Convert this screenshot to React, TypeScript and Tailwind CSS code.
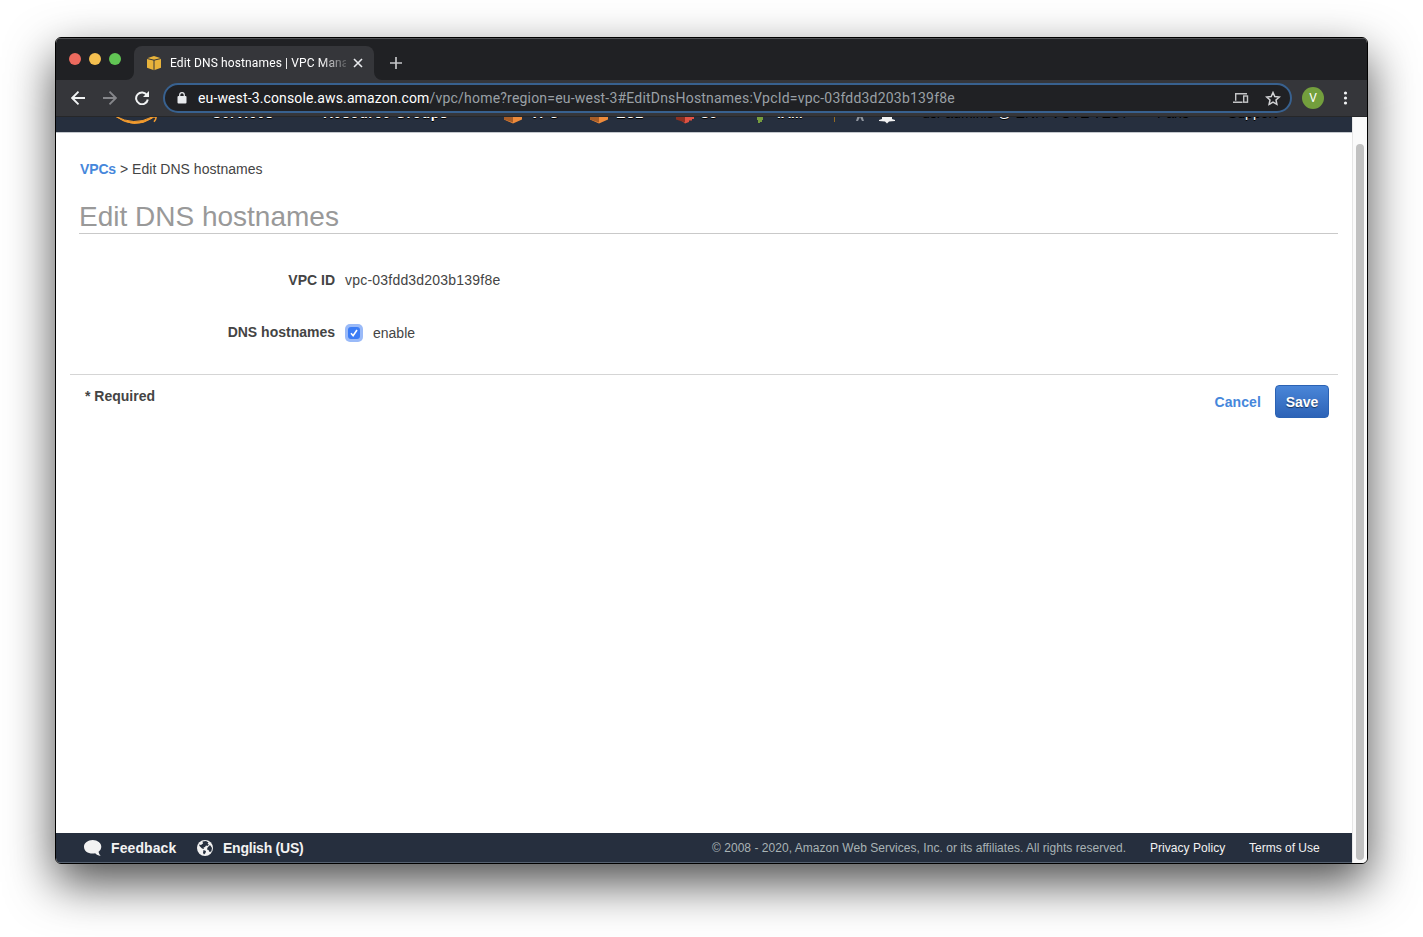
import React from "react";

function Line({ children, className, ls, size }: { children: React.ReactNode; className: string; ls?: number; size: number }) {
  return (
    <span className={"block whitespace-nowrap " + className} style={{ letterSpacing: ls, fontSize: size }}>
      {children}
    </span>
  );
}

const cube = (
  <svg width="16" height="16" viewBox="0 0 16 16" fill="none">
    <path d="M1 3.2 8 1l7 2.2v9.6L8 15.2l-7-2.4z" fill="#e8b33b" />
    <path d="M1 3.5 8 5.2 15 3.5M8 5v10.5" stroke="#35363a" strokeWidth="1" />
  </svg>
);

function Service({ label, color, dark, shape, gap }: { label: string; color: string; dark: string; shape: string; gap: string }) {
  return (
    <div className={"flex items-end " + gap}>
      <svg width="18" height="18" viewBox="0 0 18 18">
        <path d={shape} fill={color} />
        <path d="M0 3l9 2v11.500L0 13.500z" fill={dark} opacity={shape.startsWith("M6") ? 0 : 1} />
      </svg>
      <span className="mb-[2px] leading-[18px]">{label}</span>
    </div>
  );
}

const box = "M0 3l9-3 9 3v10.500L9 17.500 0 13.500z";
const bucket = "M0 3l9-3 9 3v10h-2v1.500h-3v1.500L9 17.500 6 15V14H2v-1H0z";
const key = "M6 0h6v14h-1v2H9v1H7v-3H6z";

export default function App() {
  return (
    <div className="flex h-[937px] w-[1423px] overflow-hidden bg-white pl-[55px] pt-[37px] font-['Liberation_Sans',Arial,sans-serif] text-[#444]">
      <div className="flex h-[827px] w-[1313px] flex-col overflow-hidden rounded-[6px] border border-black bg-white shadow-[0_19px_48px_0px_rgba(0,0,0,0.7)]">
        <div className="flex h-[42px] shrink-0 items-start border-t border-[#505154] bg-[#202124]">
          <div className="ml-[13px] mt-[14px] flex gap-2">
            <i className="size-3 rounded-full bg-[#ec6a5e]" />
            <i className="size-3 rounded-full bg-[#f4bf4f]" />
            <i className="size-3 rounded-full bg-[#61c554]" />
          </div>
          <svg className="ml-[5px] mt-[33px]" width="8" height="8">
            <path d="M8 0v8H0a8 8 0 0 0 8-8" fill="#35363a" />
          </svg>
          <div className="mt-[7px] flex h-[34px] w-[240px] items-center rounded-t-lg bg-[#35363a] pl-3 text-white">
            {cube}
            <div className="ml-2 w-[176px] overflow-hidden [mask-image:linear-gradient(90deg,#000_85%,#0003)]">
              <Line size={12} className="font-['Roboto',sans-serif]" ls={0.13}>Edit DNS hostnames | VPC Management</Line>
            </div>
            <svg className="ml-[7px]" width="10" height="10" viewBox="0 0 10 10" stroke="#e8eaed" strokeWidth="1.6">
              <path d="M1 1l8 8M9 1 1 9" />
            </svg>
          </div>
          <svg className="mt-[33px]" width="8" height="8">
            <path d="M0 0v8h8a8 8 0 0 1-8-8" fill="#35363a" />
          </svg>
          <svg className="ml-2 mt-[18px]" width="12" height="12" stroke="#c4c5c7" strokeWidth="1.7">
            <path d="M6 0v12M0 6h12" />
          </svg>
        </div>

        <div className="flex h-[37px] shrink-0 items-center border-b border-[#262729] bg-[#35363a]">
          <svg className="ml-[15px]" width="14" height="14" viewBox="0 0 14 14" fill="none" stroke="#f1f3f4" strokeWidth="1.9">
            <path d="M14 7H1.5M7.5.7 1.2 7l6.3 6.3" />
          </svg>
          <svg className="ml-[18px]" width="14" height="14" viewBox="0 0 14 14" fill="none" stroke="#85868a" strokeWidth="1.9">
            <path d="M0 7h12.5M6.5.7 12.8 7l-6.3 6.3" />
          </svg>
          <svg className="ml-[18px]" width="14" height="14" viewBox="0 0 14 14">
            <path d="M12 4.2A5.9 5.9 0 1 0 12.8 8.5" fill="none" stroke="#f1f3f4" strokeWidth="2" />
            <path d="M14 0v6H8z" fill="#f1f3f4" />
          </svg>
          <div className="ml-[14px] flex h-[30px] w-[1129px] items-center rounded-full border-2 border-[#38618f] bg-[#202124] pl-3">
            <svg width="10" height="12" viewBox="0 0 10 12">
              <rect x=".5" y="4" width="9" height="7.5" rx="1" fill="#e8eaed" />
              <path d="M2.7 5V3a2.3 2.3 0 0 1 4.6 0v2" fill="none" stroke="#e8eaed" strokeWidth="1.2" />
            </svg>
            <div className="ml-[11px] flex w-[1035px] shrink-0 font-['Roboto',sans-serif]">
              <Line size={14} ls={0.13} className="text-white">eu-west-3.console.aws.amazon.com</Line>
              <Line size={14} ls={0.2} className="text-[#9aa0a6]">/vpc/home?region=eu-west-3#EditDnsHostnames:VpcId=vpc-03fdd3d203b139f8e</Line>
            </div>
            <svg className="shrink-0" width="16" height="12" viewBox="0 0 16 12" fill="none" stroke="#c4c5c7" strokeWidth="1.4">
              <path d="M14 1.700H2.700v7M0 10.200h9.500" />
              <rect x="10.700" y="4" width="3.800" height="6.200" />
            </svg>
            <svg className="ml-4 shrink-0" width="16" height="15" viewBox="0 0 16 15" fill="none" stroke="#d2d3d5" strokeWidth="1.5">
              <path d="M8 1.5l1.8 4 4.5.5-3.3 3 .9 4.4L8 11.2l-3.9 2.2L5 9 1.7 6l4.5-.5z" />
            </svg>
          </div>
          <div className="ml-[10px] flex size-[22px] items-center justify-center rounded-full bg-[#739f3d] font-['Roboto',sans-serif] text-xs text-white">V</div>
          <svg className="ml-[19px]" width="5" height="14" fill="#f1f3f4">
            <circle cx="2.500" cy="2" r="1.6" />
            <circle cx="2.500" cy="7" r="1.6" />
            <circle cx="2.500" cy="12" r="1.6" />
          </svg>
        </div>

        <div className="flex min-h-0 flex-1">
          <div className="flex w-[1296px] flex-col">
            <div className="h-4 shrink-0 overflow-hidden border-b border-[#c4c8cd] bg-[#262f3e]">
              <div className="-mt-[13px] flex h-5 items-end whitespace-nowrap text-sm font-bold leading-[18px] text-white [text-shadow:0_1px_0_#000]">
                <svg className="ml-[58px] w-[46px]" width="46" height="20" viewBox="0 0 46 20" fill="none">
                  <path d="M1 12Q20 22.500 38 13l.5 1Q20 26 1 12" fill="#f29b2e" stroke="#f29b2e" />
                  <path d="M37 13l5-.3q.5 2-2 5" stroke="#f29b2e" strokeWidth="1.5" />
                </svg>
                <span className="mb-[2px] ml-[52px] w-[111px] tracking-[0.5px]">Services</span>
                <span className="mb-[2px] w-[181px] tracking-[0.5px]">Resource Groups</span>
                <div className="flex w-[330px] items-end">
                  <div className="w-[86px]"><Service label="VPC" color="#ee8b3b" dark="#a85d28" shape={box} gap="gap-2" /></div>
                  <div className="w-[86px]"><Service label="EC2" color="#ee8b3b" dark="#a85d28" shape={box} gap="gap-2" /></div>
                  <div className="w-[78px]"><Service label="S3" color="#e05243" dark="#8c3123" shape={bucket} gap="gap-[6px]" /></div>
                  <div className="-ml-[3px]"><Service label="IAM" color="#759c3e" dark="#4b612c" shape={key} gap="gap-2" /></div>
                </div>
                <i className="mb-[2px] h-4 w-px bg-[#946b24]" />
                <svg className="mb-[2px] ml-[21px]" width="8" height="14" viewBox="0 0 8 14" fill="#8d939c">
                  <path d="M2 0h4v7l2 6H6L4 9l-2 4H0l2-6z" />
                </svg>
                <svg className="ml-[15px] mr-[27px]" width="16" height="17" viewBox="0 0 16 17" fill="#f2f2f2">
                  <path d="M3 12V6a5 5 0 0 1 10 0v6l3 1v1l-6 .5-2 2-2-2L0 14v-1z" />
                </svg>
                <div className="mb-[3px] flex font-normal">
                  <span className="w-[235px]">usr adminis @ ENIT VOTE TEST</span>
                  <span className="w-[71px]">Paris</span>
                  <span>Support</span>
                </div>
              </div>
            </div>

            <main className="flex flex-1 flex-col pl-[14px] pr-[14px]">
              <div className="ml-[10px] mt-[27px] flex h-[18px] items-center gap-1 leading-[18px]">
                <Line size={14} className="font-bold text-[#4687db]" ls={-0.15}>VPCs</Line>
                <Line size={14} className="" ls={0.03}>&gt; Edit DNS hostnames</Line>
              </div>
              <h1 className="ml-[9px] mt-[18px] h-[38px] whitespace-nowrap border-b border-[#c9c9c9] text-[28px] leading-[42px] text-[#999]">Edit DNS hostnames</h1>
              <div className="mt-[37px] flex h-[18px] items-center gap-[10px] leading-[18px]">
                <div className="flex w-[265px] justify-end"><Line size={14} className="font-bold">VPC ID</Line></div>
                <Line size={14} className="" ls={0.21}>vpc-03fdd3d203b139f8e</Line>
              </div>
              <div className="mt-[34px] flex h-[18px] items-center gap-[10px] leading-[18px]">
                <div className="flex w-[265px] justify-end"><Line size={14} className="font-bold">DNS hostnames</Line></div>
                <span className="mt-[2px] flex size-[18px] shrink-0 items-center justify-center rounded-[5px] bg-[#9abaf8]">
                  <svg className="rounded-[3px] bg-[#3b7cf5]" width="12" height="12" viewBox="0 0 12 12" fill="none" stroke="#fff" strokeWidth="1.6">
                    <path d="M3 6.3l2.1 2.4L9 3" />
                  </svg>
                </span>
                <Line size={14} className="pt-[2px]">enable</Line>
              </div>
              <div className="mt-[33px] flex justify-between border-t border-[#d5d5d5] pl-[15px] pr-[9px] pt-[10px]">
                <Line size={14} className="pt-[2px] font-bold leading-[18px]">* Required</Line>
                <div className="flex items-center gap-[14px] font-bold">
                  <Line size={14} className="pt-[2px] text-[#4687db]" ls={0.1}>Cancel</Line>
                  <button className="flex h-[33px] w-[54px] items-center justify-center rounded-[4px] border border-[#2b62b3] bg-linear-to-b from-[#4a86d8] to-[#2d63b7] text-white [text-shadow:0_1px_1px_#0008]">
                    <Line size={14} className="pt-[2px]">Save</Line>
                  </button>
                </div>
              </div>
            </main>

            <footer className="flex h-[30px] shrink-0 items-center border-b border-[#566170] bg-[#262f3e] pl-7 text-[#f2f2f2]">
              <svg width="18" height="16" viewBox="0 0 18 16" fill="currentColor">
                <path d="M8.700 0C13.500 0 17.300 3 17.300 6.700c0 2.200-1.300 3.900-2.700 5.100.2 1.600 1 3 2.100 4.100-2.400-.2-4.300-1.200-5.500-2.600C4.500 14.300 0 11.300 0 6.700 0 3 3.900 0 8.700 0z" />
              </svg>
              <Line size={14} className="ml-[9px] w-[86px] pt-[2px] font-bold" ls={0.1}>Feedback</Line>
              <svg width="16" height="16" viewBox="0 0 16 16">
                <circle cx="8" cy="8" r="8" fill="#f2f2f2" />
                <path d="M5.500 1.500L9 1l2.500 1.500-1 1.500 1.500.5-1.500 1.500L9 5.500 8 7 6.500 7.500 7 9 5 8.500 2.500 6 2 4.500l2 .5L6 3.500zM13 5l2 3-.7 3.500-1.800.5-1-2-1.500-.5.500-2zM6.500 10l2.500 1-.5 2-1.500 1.500L6 13z" fill="#262f3e" />
              </svg>
              <Line size={14} className="ml-[10px] w-[489px] pt-[2px] font-bold" ls={-0.23}>English (US)</Line>
              <Line size={12} className="w-[438px] text-[#a9b3b5]" ls={0.035}>© 2008 - 2020, Amazon Web Services, Inc. or its affiliates. All rights reserved.</Line>
              <Line size={12} className="w-[99px]" ls={0.04}>Privacy Policy</Line>
              <Line size={12} className="">Terms of Use</Line>
            </footer>
          </div>
          <div className="flex flex-1 justify-center border-l border-[#e6e6e6] bg-[#fafafa] pb-[3px] pt-[27px]">
            <div className="w-2 rounded-full bg-[#c1c1c1]" />
          </div>
        </div>
      </div>
    </div>
  );
}
